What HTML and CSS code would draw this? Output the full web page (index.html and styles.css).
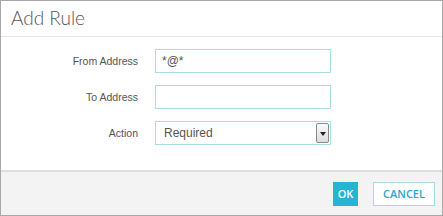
FILE: index.html
```html
<!DOCTYPE html>
<html>
<head>
  <title>Add Rule</title>
  <link rel="stylesheet" href="styles.css">
</head>
<body>
  <div class="dialog">
    <div class="dialog-header">Add Rule</div>
    <div class="dialog-body">
      <div class="form-row">
        <label class="form-label">From Address</label>
        <input class="form-input" type="text" value="*@*">
      </div>
      <div class="form-row">
        <label class="form-label">To Address</label>
        <input class="form-input" type="text" value="">
      </div>
      <div class="form-row">
        <label class="form-label">Action</label>
        <div class="form-select">
          <span class="select-text">Required</span>
          <span class="select-arrow"></span>
        </div>
      </div>
    </div>
    <div class="dialog-footer">
      <button class="btn btn-ok">OK</button>
      <button class="btn btn-cancel">CANCEL</button>
    </div>
  </div>
</body>
</html>
```

FILE: styles.css
```css
body {
  margin: 0;
  background-color: white;
  font-family: "Liberation Sans", Arial, sans-serif;
}
.dialog {
  width: 441px;
  height: 214px;
  border: 1px solid #a8a8a8;
  display: flex;
  flex-direction: column;
  background-color: white;
}
.dialog-header {
  height: 36px;
  box-sizing: border-box;
  border-bottom: 1px solid #e6e6e6;
  padding-left: 10px;
  font-family: "Lato", sans-serif;
  font-weight: 300;
  font-size: 19px;
  color: #555;
  line-height: 34px;
}
.dialog-body {
  flex: 1;
  padding-top: 12px;
}
.form-row {
  display: flex;
  align-items: center;
  margin-bottom: 12px;
}
.form-label {
  width: 137px;
  text-align: right;
  font-size: 10.5px;
  color: #555;
  margin-right: 17px;
}
.form-input {
  width: 176px;
  height: 24px;
  box-sizing: border-box;
  border: 1px solid #a9dce6;
  padding: 0 6px;
  font-family: "Liberation Sans", Arial, sans-serif;
  font-size: 12px;
  color: #555;
  outline: none;
  margin: 0;
}
.form-select {
  width: 176px;
  height: 24px;
  box-sizing: border-box;
  border: 1px solid #a9dce6;
  display: flex;
  align-items: center;
  justify-content: space-between;
}
.select-text {
  padding-left: 8px;
  font-size: 12px;
  color: #555;
}
.select-arrow {
  width: 13px;
  height: 20px;
  margin-right: 1px;
  box-sizing: border-box;
  border: 1px solid #8a8a8a;
  border-radius: 2px;
  background: linear-gradient(#fafafa, #dcdcdc);
  position: relative;
}
.select-arrow::after {
  content: "";
  position: absolute;
  left: 3px;
  top: 8px;
  border-left: 3px solid transparent;
  border-right: 3px solid transparent;
  border-top: 4px solid #222;
}
.dialog-footer {
  height: 43px;
  border-top: 2px solid #dedede;
  background-color: #f3f3f3;
  display: flex;
  justify-content: flex-end;
  align-items: center;
  padding-right: 7px;
  gap: 15px;
}
.btn {
  height: 24px;
  font-family: "Open Sans", sans-serif;
  font-size: 11px;
  font-weight: 600;
  padding: 0;
  cursor: pointer;
}
.btn-ok {
  width: 25px;
  background-color: #25b5d2;
  border: none;
  color: white;
}
.btn-cancel {
  width: 62px;
  background-color: white;
  border: 1px solid #a9dce6;
  color: #25a8c8;
}
```
